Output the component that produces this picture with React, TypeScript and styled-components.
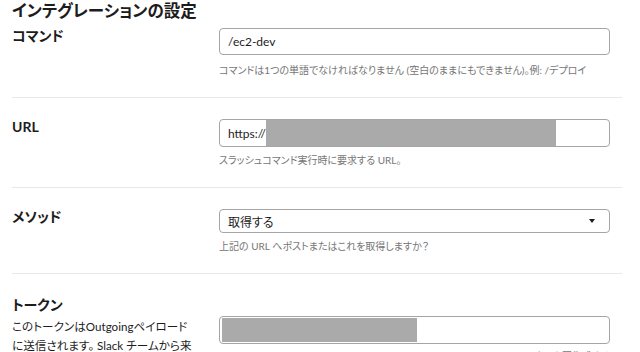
import styled, { createGlobalStyle } from "styled-components";

const GlobalStyle = createGlobalStyle`
  html, body {
    margin: 0;
    padding: 0;
    background: #ffffff;
    overflow: hidden;
  }
  body {
    font-family: Lato, "Noto Sans CJK JP", sans-serif;
    color: #1d1c1d;
    font-feature-settings: "palt";
  }
`;

const Page = styled.div`
  width: 610px;
  padding: 0 18px 0 12px;
`;

const Title = styled.h2`
  margin: 0;
  font-size: 16.5px;
  line-height: 22px;
  font-weight: 700;
`;

const Row = styled.section<{ $first?: boolean; $last?: boolean }>`
  display: grid;
  grid-template-columns: 207px 1fr;
  padding: ${(p) => (p.$first ? "6px" : "21px")} 0 ${(p) => (p.$last ? "0" : "19px")};
  border-bottom: ${(p) => (p.$last ? "none" : "1px solid #e8e8e8")};
`;

const LabelCol = styled.div`
  display: flex;
  flex-direction: column;
`;

const Label = styled.div<{ $flush?: boolean }>`
  margin-top: ${(p) => (p.$flush ? 0 : -2)}px;
  font-size: 14px;
  line-height: 20px;
  font-weight: 700;
`;

const Desc = styled.p`
  margin: 2px 0 0;
  font-size: 11.6px;
  line-height: 19px;
  color: #1d1c1d;
`;

const DescLine = styled.span`
  display: block;
  white-space: nowrap;
`;

const Field = styled.div<{ $offset?: number }>`
  display: flex;
  flex-direction: column;
  padding-right: 12px;
  margin-top: ${(p) => p.$offset ?? 0}px;
`;

const InputBox = styled.div<{ $h?: number }>`
  display: flex;
  align-items: center;
  box-sizing: border-box;
  height: ${(p) => p.$h ?? 28}px;
  border: 1px solid #a5a5a5;
  border-radius: 4px;
  padding: 0 8px;
  font-size: 12px;
  overflow: hidden;
`;

const Redacted = styled.div<{ $inset?: boolean }>`
  align-self: stretch;
  background: #aaaaaa;
  margin: ${(p) => (p.$inset ? "1px 0 1px -6px" : "0")};
`;

const SelectBox = styled(InputBox)`
  justify-content: space-between;
`;

const Caret = styled.span`
  width: 0;
  height: 0;
  margin-right: 6px;
  border-left: 3.5px solid transparent;
  border-right: 3.5px solid transparent;
  border-top: 4px solid #1d1c1d;
`;

const Help = styled.div<{ $gap?: number; $right?: boolean }>`
  margin-top: ${(p) => p.$gap ?? 5}px;
  font-size: 10px;
  line-height: 16px;
  color: #767676;
  text-align: ${(p) => (p.$right ? "right" : "left")};
`;

const tokenDesc = [
  "このトークンはOutgoingペイロード",
  "に送信されます。 Slack チームから来",
  "たリクエストであることを確認するため",
];

export default function App() {
  return (
    <>
      <GlobalStyle />
      <Page>
        <Title>インテグレーションの設定</Title>

        <Row $first>
          <LabelCol>
            <Label>コマンド</Label>
          </LabelCol>
          <Field>
            <InputBox $h={27}>/ec2-dev</InputBox>
            <Help $gap={7}>
              コマンドは1つの単語でなければなりません (空白のままにもできません)。例: /デプロイ
            </Help>
          </Field>
        </Row>

        <Row>
          <LabelCol>
            <Label>URL</Label>
          </LabelCol>
          <Field>
            <InputBox>
              https://
              <Redacted style={{ width: 290 }} />
            </InputBox>
            <Help>スラッシュコマンド実行時に要求する URL。</Help>
          </Field>
        </Row>

        <Row>
          <LabelCol>
            <Label>メソッド</Label>
          </LabelCol>
          <Field>
            <SelectBox $h={24}>
              取得する
              <Caret />
            </SelectBox>
            <Help>上記の URL へポストまたはこれを取得しますか？</Help>
          </Field>
        </Row>

        <Row $last>
          <LabelCol>
            <Label $flush>トークン</Label>
            <Desc>
              {tokenDesc.map((line) => (
                <DescLine key={line}>{line}</DescLine>
              ))}
            </Desc>
          </LabelCol>
          <Field $offset={21}>
            <InputBox>
              <Redacted $inset style={{ width: 195 }} />
            </InputBox>
            <Help $gap={4} $right>
              トークンを再生成する
            </Help>
          </Field>
        </Row>
      </Page>
    </>
  );
}
